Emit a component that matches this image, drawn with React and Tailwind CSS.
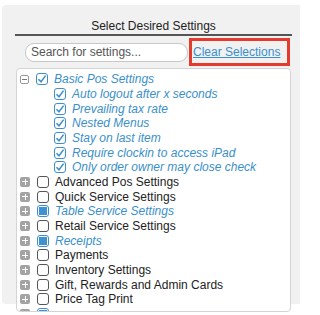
import { useState } from 'react'

const GROUPS = [
  {
    name: 'Basic Pos Settings',
    state: 'checked',
    open: true,
    items: [
      'Auto logout after x seconds',
      'Prevailing tax rate',
      'Nested Menus',
      'Stay on last item',
      'Require clockin to access iPad',
      'Only order owner may close check',
    ],
  },
  { name: 'Advanced Pos Settings', state: 'off' },
  { name: 'Quick Service Settings', state: 'off' },
  { name: 'Table Service Settings', state: 'partial' },
  { name: 'Retail Service Settings', state: 'off' },
  { name: 'Receipts', state: 'partial' },
  { name: 'Payments', state: 'off' },
  { name: 'Inventory Settings', state: 'off' },
  { name: 'Gift, Rewards and Admin Cards', state: 'off' },
  { name: 'Price Tag Print', state: 'off' },
]

function Expander({ open }) {
  if (open) {
    return (
      <span className="flex-none w-[9px] h-[9px] rounded-[2px] border border-[#9a9a9a] bg-white flex items-center justify-center">
        <span className="w-[5px] h-px bg-[#777]" />
      </span>
    )
  }
  return (
    <span className="flex-none w-[10px] h-[10px] rounded-[2px] bg-[#a3a3a3] relative">
      <span className="absolute left-[2px] top-[4.5px] w-[6px] h-px bg-white" />
      <span className="absolute top-[2px] left-[4.5px] h-[6px] w-px bg-white" />
    </span>
  )
}

function Box({ state, className = '' }) {
  if (state === 'checked') {
    return (
      <span className={`flex-none w-[12px] h-[12px] rounded-[3px] border border-[#3d8ec9] bg-white flex items-center justify-center ${className}`}>
        <svg width="10" height="10" viewBox="0 0 10 10">
          <path d="M1.5 5.2 L4 7.8 L8.6 1.6" fill="none" stroke="#3d8ec9" strokeWidth="1.5" />
        </svg>
      </span>
    )
  }
  if (state === 'partial') {
    return (
      <span className={`flex-none w-[12px] h-[12px] rounded-[3px] border border-[#3d8ec9] bg-white flex items-center justify-center ${className}`}>
        <span className="w-[8px] h-[8px] bg-[#3d93d2]" />
      </span>
    )
  }
  return <span className={`flex-none block w-[12px] h-[12px] rounded-[3px] border border-[#555] bg-white ${className}`} />
}

export default function App() {
  const [query, setQuery] = useState('')

  return (
    <div className="w-[300px] h-[315px] bg-white overflow-hidden font-['Liberation_Sans',Arial,sans-serif]">
      <div className="ml-[2px] mt-[5px] w-[310px] h-[299px] bg-[#f1f1f1] rounded-[4px] pt-[14px]">
        <div className="w-[277px] ml-[13px] text-center text-[12px] text-[#222] leading-[14px]">
          Select Desired Settings
        </div>
        <div className="w-[277px] ml-[13px] h-[2px] bg-[#555] mt-[1px]" />

        <div className="flex items-center mt-[2px] h-[28px]">
          <input
            className="ml-[23px] w-[163px] h-[19px] rounded-[9px] border border-[#c8c8c8] bg-white px-[5px] text-[12px] text-[#333] placeholder:text-[#555] outline-none"
            placeholder="Search for settings..."
            value={query}
            onChange={(e) => setQuery(e.target.value)}
          />
          <div className="ml-[1px] w-[101px] h-[28px] border-[3px] border-[#e33b2e] flex items-center pl-[1px]">
            <a href="#" className="text-[12px] text-[#3b8fcb] underline leading-[14px] whitespace-nowrap">
              Clear Selections
            </a>
          </div>
        </div>

        <div className="ml-[14px] mt-[2px] w-[275px] h-[244px] bg-white border border-[#d4d4d4] rounded-[4px] overflow-hidden pt-[3px]">
          {GROUPS.map((g) => (
            <div key={g.name}>
              <div className="flex items-center h-[14.67px] pl-[3px]">
                <Expander open={g.open} />
                <Box state={g.state} className="ml-[7px]" />
                <span
                  className={`ml-[6px] text-[12px] leading-[14px] whitespace-nowrap ${
                    g.state === 'off' ? 'text-[#222]' : 'text-[#3b8fcb] italic'
                  }`}
                >
                  {g.name}
                </span>
              </div>
              {g.open &&
                g.items.map((it) => (
                  <div key={it} className="flex items-center h-[14.67px] pl-[37px]">
                    <Box state="checked" />
                    <span className="ml-[6px] text-[12px] leading-[14px] italic text-[#3b8fcb] whitespace-nowrap">
                      {it}
                    </span>
                  </div>
                ))}
            </div>
          ))}
          <div className="flex items-center h-[14.67px] pl-[3px]">
            <Expander />
            <Box state="partial" className="ml-[7px]" />
          </div>
        </div>
      </div>
    </div>
  )
}
